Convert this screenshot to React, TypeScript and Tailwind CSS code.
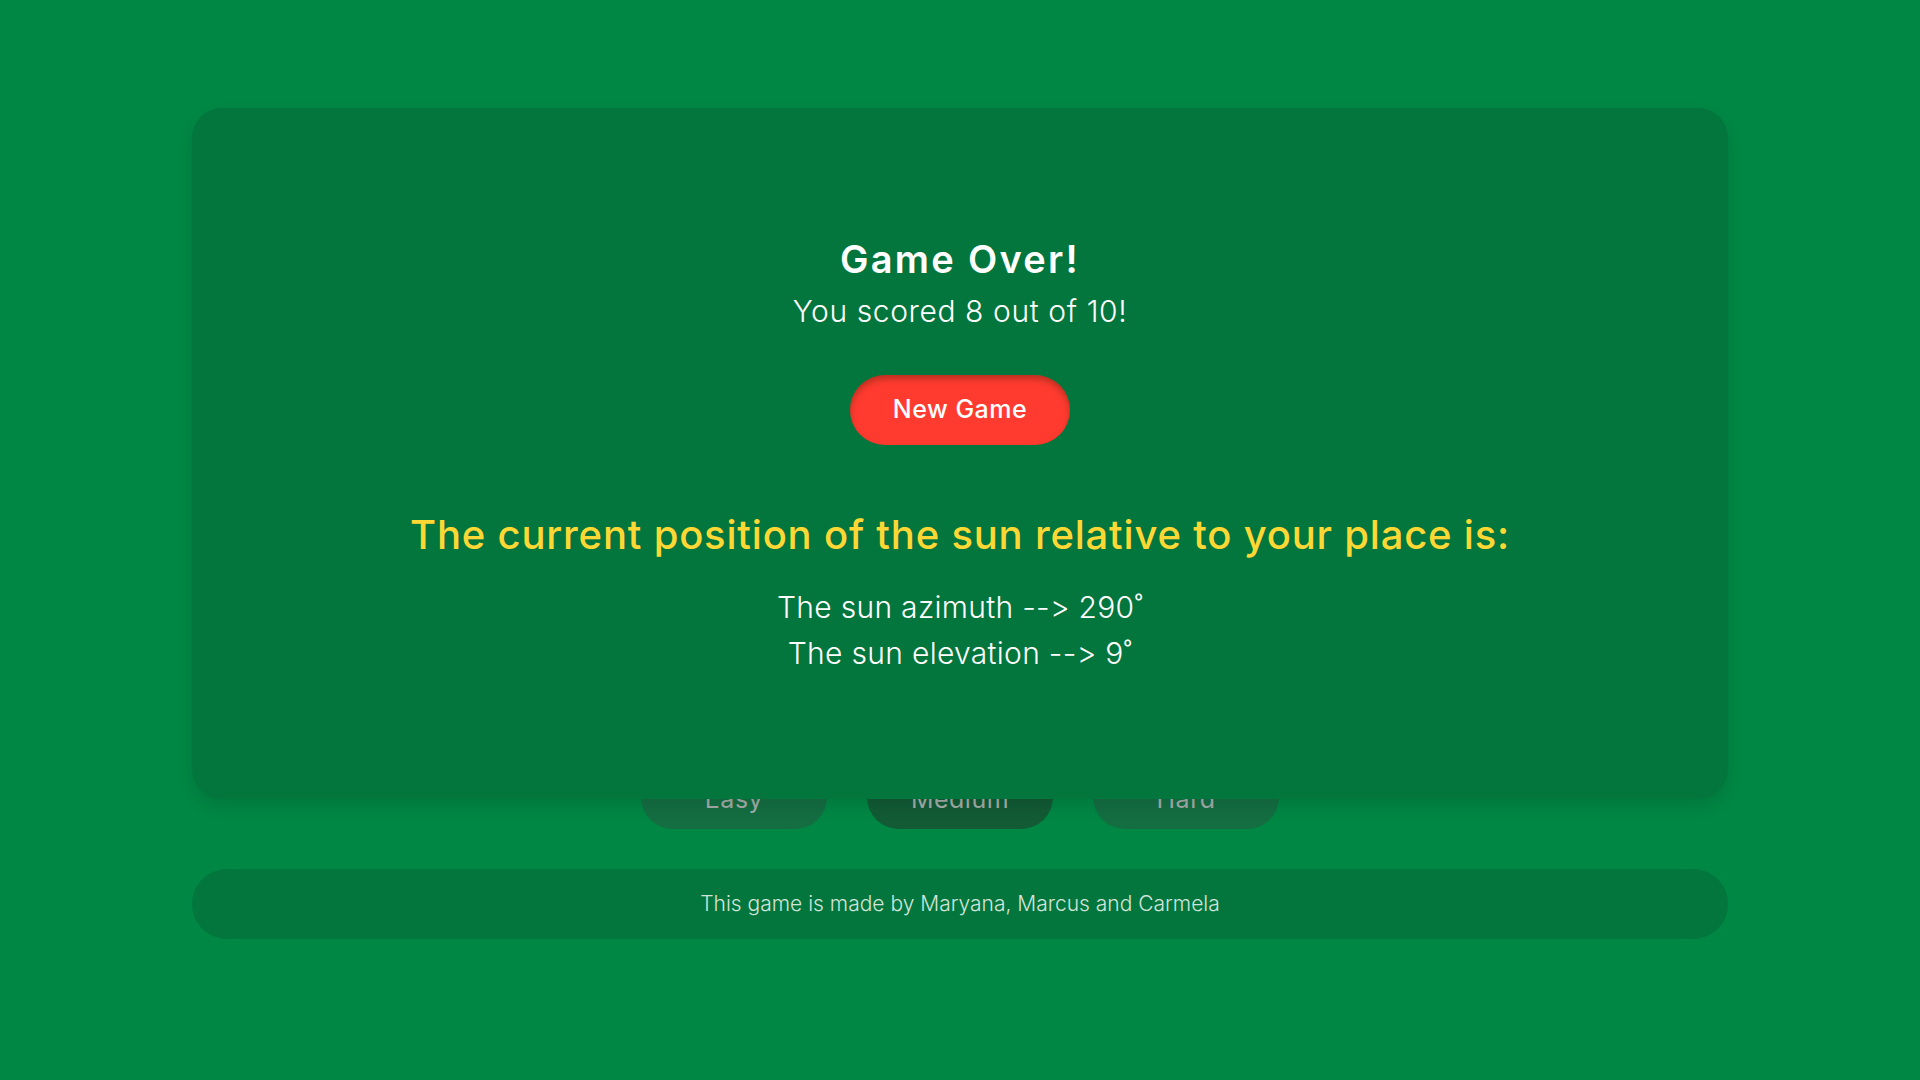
import { useState } from 'react'

const levels = ['Easy', 'Medium', 'Hard']

export default function App() {
  const [level, setLevel] = useState('Medium')

  return (
    <div className="min-h-screen w-full bg-[#008744] pt-[108px] font-['Inter',sans-serif] [font-feature-settings:'calt'_0]">
      <div className="mx-auto w-4/5">
        {/* game area, covered by the result card */}
        <div className="relative h-[721px]">
          <div className="flex h-full items-end justify-center gap-[40px]">
            {levels.map((l) => (
              <button
                key={l}
                onClick={() => setLevel(l)}
                className={
                  'h-[64px] w-[186px] rounded-full pt-[5px] text-[25px] tracking-[0.02em] text-[#a3ada8] ' +
                  (l === level ? 'bg-[#125b35]' : 'bg-[#146e42]')
                }
              >
                {l}
              </button>
            ))}
          </div>

          <div className="absolute inset-x-0 top-0 flex h-[691px] flex-col items-center rounded-[30px] bg-[#03763e] pt-[127px] text-center shadow-[0_8px_16px_rgba(0,0,0,0.1)]">
            <h2 className="text-[38px] font-semibold leading-[48px] tracking-[0.06em] text-white">Game Over!</h2>
            <p className="mt-[8px] text-[30px] font-light leading-[40px] tracking-[0.02em] text-white">You scored 8 out of 10!</p>
            <button className="mt-[44px] h-[70px] w-[220px] rounded-[35px] bg-[#ff3b30] text-[25px] font-medium tracking-[0.02em] text-white shadow-[inset_0_4px_6px_rgba(130,40,20,0.55)]">
              New Game
            </button>
            <h3 className="mt-[65px] text-[40px] font-medium leading-[50px] tracking-[0.02em] text-[#fdd835]">
              The current position of the sun relative to your place is:
            </h3>
            <p className="mt-[24px] text-[30px] font-light leading-[46px] tracking-[0.01em] text-white">The sun azimuth --&gt; 290˚</p>
            <p className="text-[30px] font-light leading-[46px] tracking-[0.01em] text-white">The sun elevation --&gt; 9˚</p>
          </div>
        </div>

        <footer className="mt-[40px] flex h-[70px] items-center justify-center rounded-[35px] bg-[#03763e] text-[21px] font-light text-[#d2e4da]">
          This game is made by Maryana, Marcus and Carmela
        </footer>
      </div>
    </div>
  )
}
